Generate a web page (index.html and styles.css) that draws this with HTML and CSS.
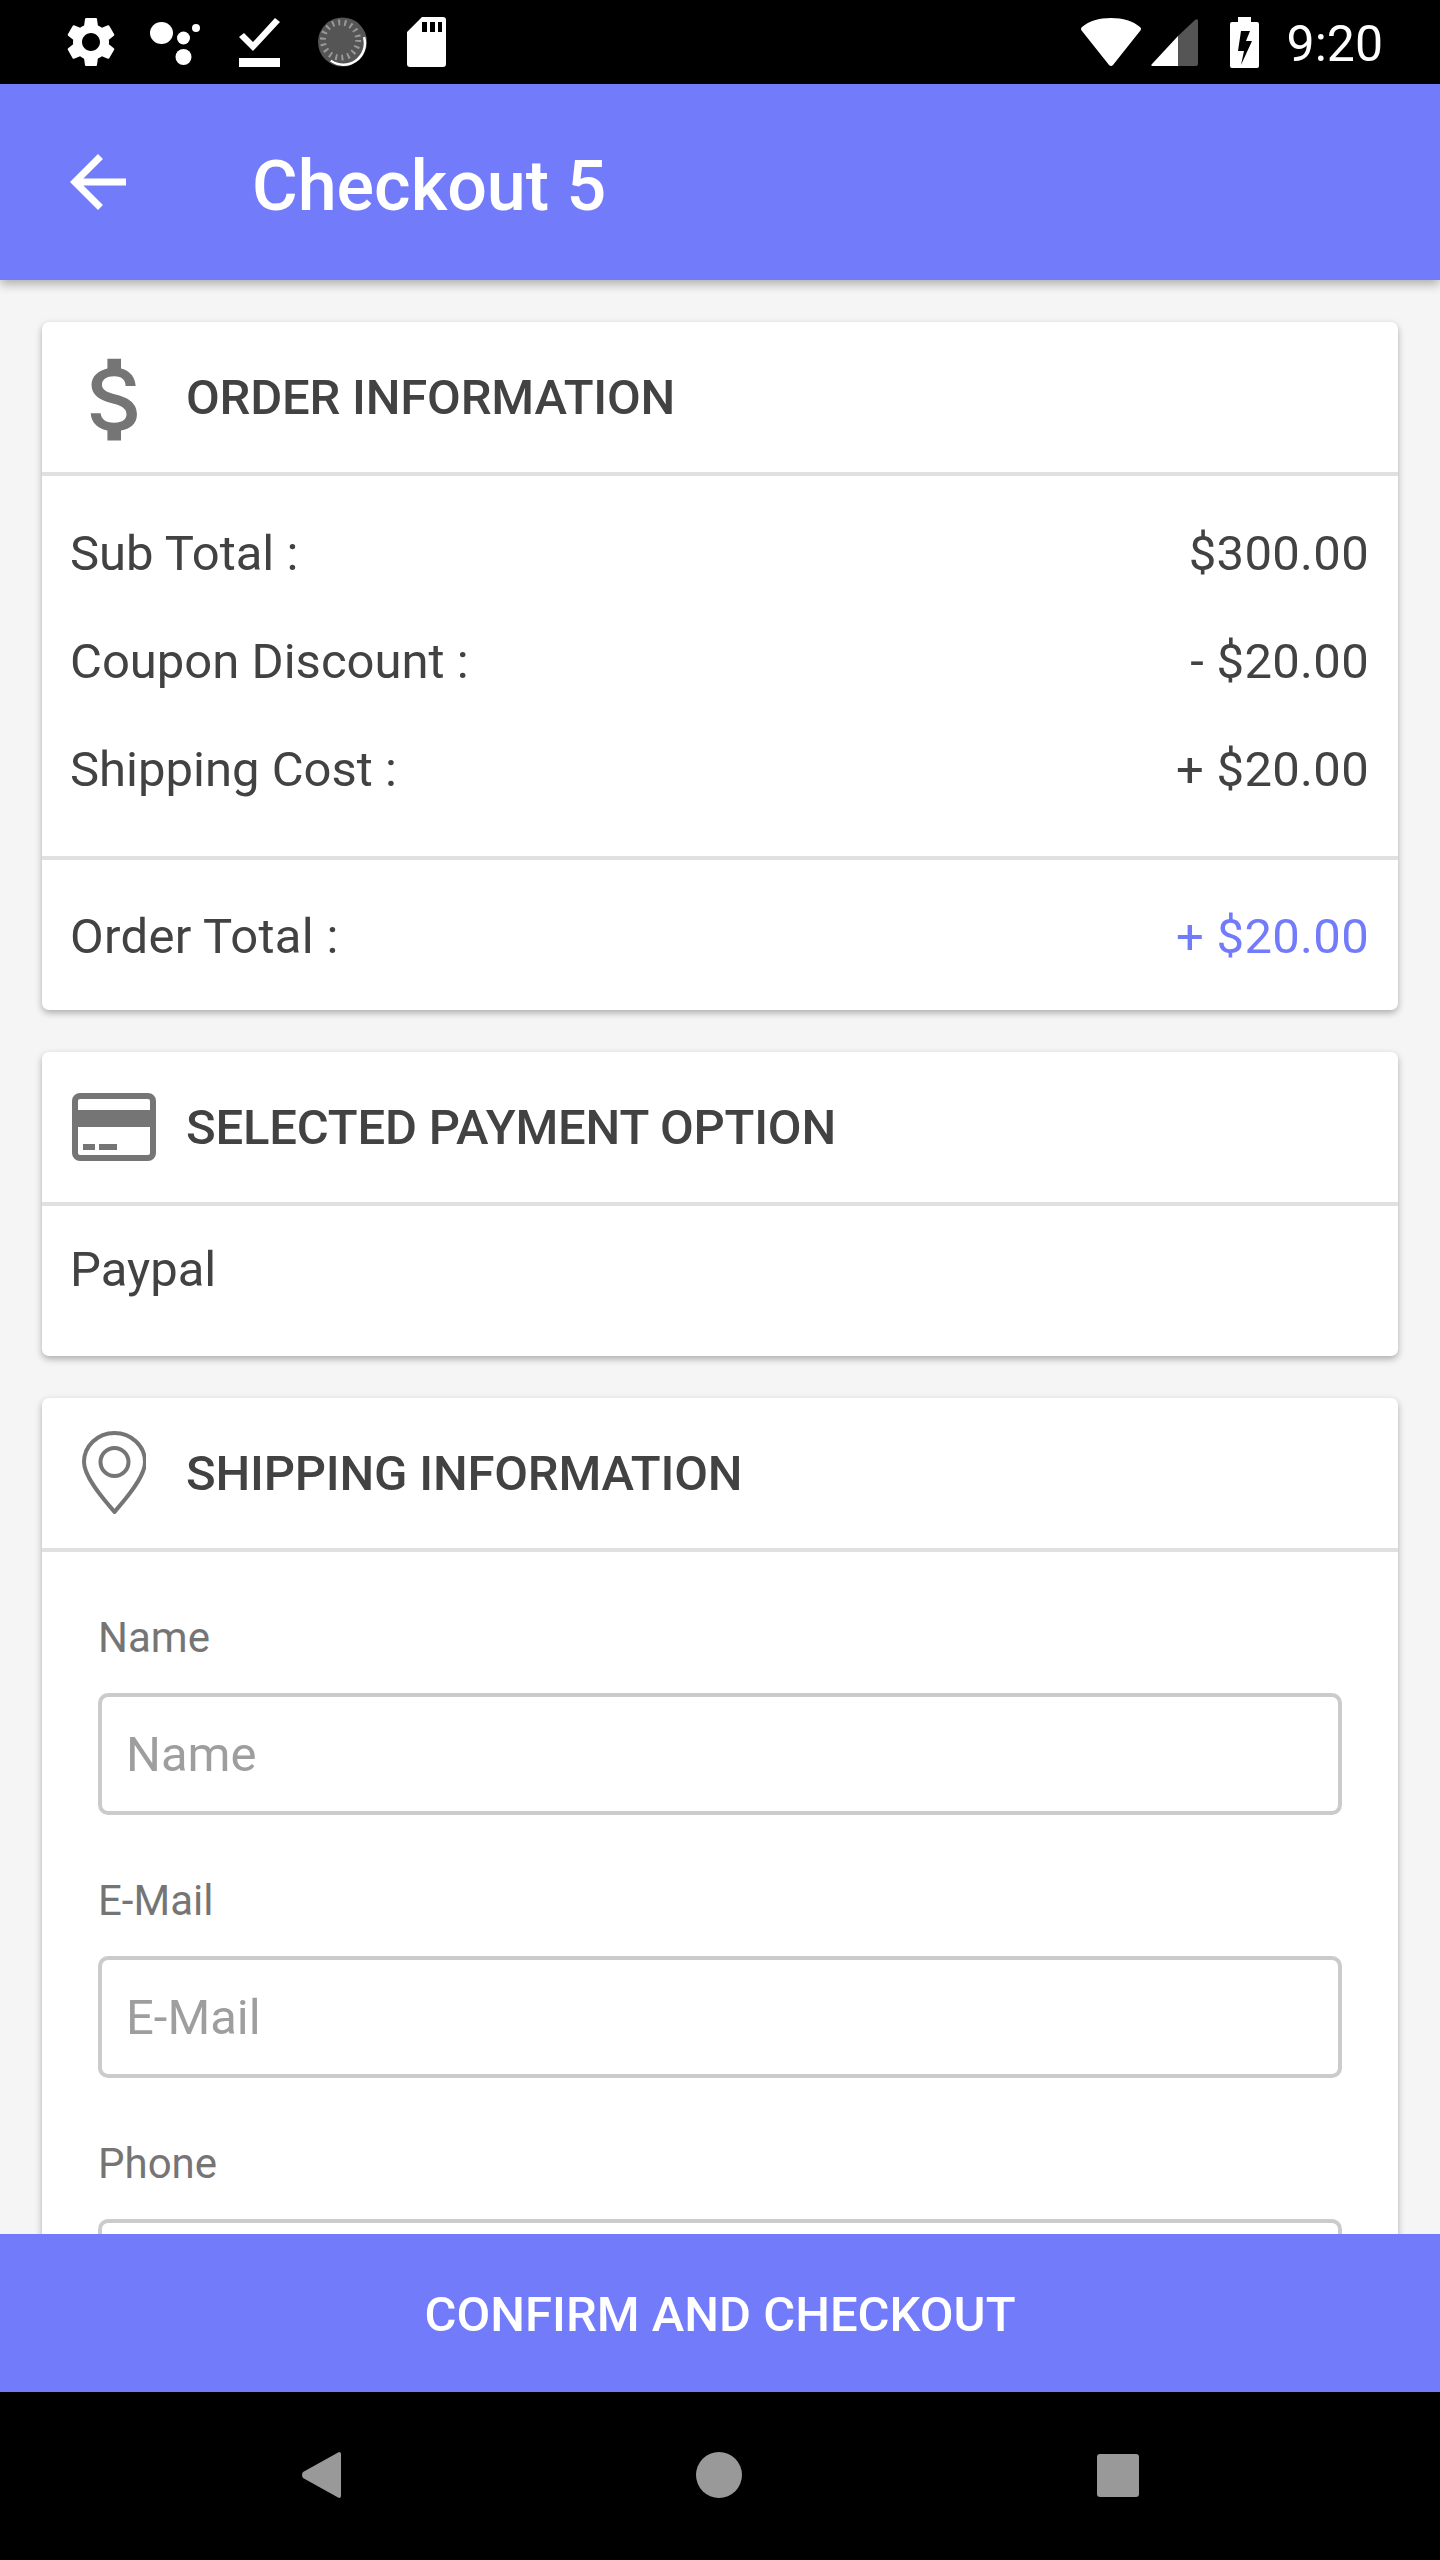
FILE: index.html
```html
<!DOCTYPE html>
<html>
<head>
    <title>Checkout 5</title>
    <link rel="stylesheet" href="styles.css">
</head>

<body>
    <div class="screen">
        <!-- Status bar -->
        <div class="status-bar">
            <div class="status-left">
                <svg class="st-cog" viewBox="2.5 2 19 20"><path fill="#fff" d="M19.14 12.94c.04-.3.06-.61.06-.94 0-.32-.02-.64-.07-.94l2.03-1.58c.18-.14.23-.41.12-.61l-1.92-3.32c-.12-.22-.37-.29-.59-.22l-2.39.96c-.5-.38-1.03-.7-1.62-.94l-.36-2.54c-.04-.24-.24-.41-.48-.41h-3.84c-.24 0-.43.17-.47.41l-.36 2.54c-.59.24-1.13.57-1.62.94l-2.39-.96c-.22-.08-.47 0-.59.22L2.74 8.87c-.12.21-.08.47.12.61l2.03 1.58c-.05.3-.09.63-.09.94s.02.64.07.94l-2.03 1.58c-.18.14-.23.41-.12.61l1.92 3.32c.12.22.37.29.59.22l2.39-.96c.5.38 1.03.7 1.62.94l.36 2.54c.05.24.24.41.48.41h3.84c.24 0 .44-.17.47-.41l.36-2.54c.59-.24 1.13-.56 1.62-.94l2.39.96c.22.08.47 0 .59-.22l1.92-3.32c.12-.22.07-.47-.12-.61l-2.01-1.58zM12 15.6c-1.98 0-3.6-1.62-3.6-3.6s1.62-3.6 3.6-3.6 3.6 1.62 3.6 3.6-1.62 3.6-3.6 3.6z"/></svg>
                <svg class="st-dots" viewBox="0 0 50 44"><ellipse cx="11.500" cy="11" rx="11.500" ry="11" fill="#fff"/><circle cx="33.500" cy="16" r="6.500" fill="#fff"/><circle cx="46" cy="6" r="4" fill="#fff"/><circle cx="33.500" cy="35" r="8" fill="#fff"/></svg>
                <svg class="st-check" viewBox="0 0 41 50"><path fill="#fff" d="M0 20l5-4 9 9L36 1l5 4-27 29zM0 41h41v9H0z"/></svg>
                <svg class="st-dial" viewBox="0 0 50 50">
                    <circle cx="25" cy="25" r="25" fill="#555"/>
                    <path fill="none" stroke="#fff" stroke-width="2.5" d="M47 20a22 22 0 0 1-34 24"/>
                    <circle cx="23" cy="23" r="18" fill="none" stroke="#999" stroke-width="6" stroke-dasharray="2 4.3"/>
                </svg>
                <svg class="st-sd" viewBox="0 0 39 50"><path fill="#fff" fill-rule="evenodd" d="M15 0h21q3 0 3 3v44q0 3-3 3H3q-3 0-3-3V15zM15 5v10h5V5zm8 0v10h5V5zm8 0v10h4V5z"/></svg>
            </div>
            <div class="status-right">
                <svg class="st-wifi" viewBox="0 0 60 48"><path fill="#fff" d="M30 0c12 0 22 3 29 9q2 2 0 4L32 47q-2 2-4 0L1 13q-2-2 0-4C8 3 18 0 30 0z"/></svg>
                <svg class="st-signal" viewBox="0 0 47 47"><path fill="#555" d="M27 17L44 1q3-2 3 1v43q0 2-2 2H27z"/><path fill="#fff" d="M27 17v30H2q-3 0-1-2z"/></svg>
                <svg class="st-battery" viewBox="0 0 29 51"><path fill="#fff" fill-rule="evenodd" d="M8 0h13v5h6q2 0 2 2v42q0 2-2 2H2q-2 0-2-2V7q0-2 2-2h6zM11 14l-3 20h6l-3 14 11-24h-6l4-10z"/></svg>
                <span class="time">9:20</span>
            </div>
        </div>

        <!-- Header -->
        <div class="app-bar">
            <svg class="back-icon" viewBox="0 0 24 24"><path fill="#fff" d="M20 11H7.83l5.59-5.59L12 4l-8 8 8 8 1.41-1.41L7.83 13H20v-2z"/></svg>
            <span class="app-title">Checkout 5</span>
        </div>

        <div class="content">
            <div class="card">
                <div class="card-head">
                    <svg class="ic-dollar" viewBox="0 0 24 24"><path fill="#757575" d="M11.8 10.9c-2.27-.59-3-1.2-3-2.15 0-1.09 1.01-1.85 2.7-1.85 1.78 0 2.44.85 2.5 2.1h2.21c-.07-1.72-1.12-3.3-3.21-3.81V3h-3v2.16c-1.94.42-3.5 1.68-3.5 3.61 0 2.31 1.91 3.46 4.7 4.13 2.5.6 3 1.48 3 2.41 0 .69-.49 1.79-2.7 1.79-2.06 0-2.87-.92-2.98-2.1h-2.2c.12 2.19 1.76 3.42 3.68 3.83V21h3v-2.15c1.95-.37 3.5-1.5 3.5-3.55 0-2.84-2.43-3.81-4.7-4.4z"/></svg>
                    <h2>ORDER INFORMATION</h2>
                </div>
                <div class="price-rows">
                    <div class="row"><span>Sub Total :</span><span class="amount">$300.00</span></div>
                    <div class="row"><span>Coupon Discount :</span><span class="amount">- $20.00</span></div>
                    <div class="row"><span>Shipping Cost :</span><span class="amount">+ $20.00</span></div>
                </div>
                <div class="row total-row"><span class="total-label">Order Total :</span><span class="amount accent">+ $20.00</span></div>
            </div>

            <div class="card">
                <div class="card-head">
                    <svg class="ic-card" viewBox="0 0 84 68">
                        <rect x="3" y="3" width="78" height="62" rx="5" fill="none" stroke="#757575" stroke-width="6"/>
                        <path fill="#757575" d="M3 17h78v17H3zM11 51h12v6H11zM27 51h18v6H27z"/>
                    </svg>
                    <h2>SELECTED PAYMENT OPTION</h2>
                </div>
                <div class="payment-name">Paypal</div>
            </div>

            <div class="card">
                <div class="card-head">
                    <svg class="ic-pin" viewBox="0 0 64 84">
                        <path fill="none" stroke="#757575" stroke-width="4" stroke-linejoin="round" d="M32.500 81C27 74 2 48 2 31a30.500 29 0 0 1 61 0c0 17-25 43-30.500 50z"/>
                        <circle cx="32.500" cy="31" r="14" fill="none" stroke="#757575" stroke-width="4"/>
                    </svg>
                    <h2>SHIPPING INFORMATION</h2>
                </div>
                <div class="form-body">
                    <label for="name">Name</label>
                    <input type="text" id="name" placeholder="Name">
                    <label for="email">E-Mail</label>
                    <input type="text" id="email" placeholder="E-Mail">
                    <label for="phone">Phone</label>
                    <input type="text" id="phone" placeholder="Phone">
                </div>
            </div>
        </div>

        <div class="confirm-btn">CONFIRM AND CHECKOUT</div>

        <!-- Nav bar -->
        <div class="nav-bar">
            <svg class="nav-back" viewBox="0 0 40 46"><path fill="#999" d="M38 0q2 0 2 2v42q0 2-2 2L2 26q-2-3 0-6z"/></svg>
            <div class="nav-home"></div>
            <div class="nav-recent"></div>
        </div>
    </div>
</body>
</html>
```

FILE: styles.css
```css
* {
    box-sizing: border-box;
}

body {
    margin: 0;
    font-family: Roboto, "Liberation Sans", sans-serif;
    background-color: #f5f5f5;
}

.screen {
    width: 1440px;
    height: 2560px;
    display: flex;
    flex-direction: column;
    overflow: hidden;
}

/* status bar */
.status-bar {
    height: 84px;
    flex: none;
    background-color: #000;
    display: flex;
    justify-content: space-between;
    align-items: center;
    padding: 0 57px 0 66px;
}

.status-left,
.status-right {
    display: flex;
    align-items: center;
}

.st-cog { width: 50px; height: 50px; }
.st-dots { width: 50px; height: 44px; margin-left: 34px; margin-top: 3px; }
.st-check { width: 41px; height: 50px; margin-left: 39px; }
.st-dial { width: 49px; height: 50px; margin-left: 38px; }
.st-sd { width: 39px; height: 50px; margin-left: 40px; }

.st-wifi { width: 60px; height: 48px; }
.st-signal { width: 47px; height: 47px; margin-left: 10px; }
.st-battery { width: 29px; height: 51px; margin-left: 32px; }

.time {
    color: #fff;
    font-size: 50px;
    margin-left: 28px;
    padding-top: 3px;
}

/* header */
.app-bar {
    height: 196px;
    flex: none;
    background-color: #727cfa;
    display: flex;
    align-items: center;
    padding-left: 56px;
    box-shadow: 0 4px 10px rgba(0, 0, 0, 0.3);
    position: relative;
}

.back-icon {
    width: 84px;
    height: 84px;
}

.app-title {
    color: #fff;
    font-size: 70px;
    font-weight: 500;
    margin-left: 112px;
    padding-top: 7px;
}

/* cards */
.content {
    flex: 1;
    min-height: 0;
    padding: 42px 42px 0;
    display: flex;
    flex-direction: column;
    gap: 42px;
    overflow: hidden;
}

.card {
    flex: none;
    background-color: #fff;
    border-radius: 7px;
    box-shadow: 0 3px 7px rgba(0, 0, 0, 0.3);
}

.card-head {
    height: 154px;
    display: flex;
    align-items: center;
    border-bottom: 4px solid #e0e0e0;
    position: relative;
    padding-left: 144px;
}

.card-head h2 {
    margin: 0;
    font-size: 49px;
    font-weight: 500;
    letter-spacing: -0.2px;
    color: #424242;
}

.ic-dollar {
    position: absolute;
    left: 20px;
    top: 23px;
    width: 109px;
    height: 109px;
}

.ic-card {
    position: absolute;
    left: 30px;
    top: 41px;
    width: 84px;
    height: 68px;
}

.ic-pin {
    position: absolute;
    left: 40px;
    top: 33px;
    width: 64px;
    height: 84px;
}

.price-rows {
    padding: 23px 0 33px;
    border-bottom: 4px solid #e0e0e0;
}

.row {
    display: flex;
    justify-content: space-between;
    align-items: center;
    height: 108px;
    padding: 0 29px 0 28px;
    font-size: 49px;
    color: #424242;
}

.amount {
    letter-spacing: 0.3px;
}

.total-row {
    height: 150px;
    padding-top: 3px;
}

.total-label {
    letter-spacing: 0.3px;
}

.accent {
    color: #727cfa;
}

.payment-name {
    height: 150px;
    padding: 35px 29px 0 28px;
    font-size: 49px;
    color: #424242;
}

.form-body {
    padding: 61px 56px 0;
}

.form-body label {
    display: block;
    font-size: 42px;
    line-height: 50px;
    color: #757575;
    margin-bottom: 30px;
}

.form-body input {
    display: block;
    width: 100%;
    height: 122px;
    padding: 0 24px;
    margin-bottom: 61px;
    border: 4px solid #cbcbcb;
    border-radius: 10px;
    background-color: #fff;
    font-family: Roboto, "Liberation Sans", sans-serif;
    font-size: 49px;
    color: #424242;
}

.form-body input::placeholder {
    color: #9e9e9e;
    opacity: 1;
}

/* bottom */
.confirm-btn {
    height: 158px;
    flex: none;
    background-color: #727cfa;
    color: #fff;
    font-size: 49px;
    font-weight: 500;
    padding-top: 2px;
    display: flex;
    align-items: center;
    justify-content: center;
    position: relative;
}

.nav-bar {
    height: 168px;
    flex: none;
    background-color: #000;
    position: relative;
}

.nav-back {
    position: absolute;
    left: 301px;
    top: 60px;
    width: 40px;
    height: 46px;
}

.nav-home {
    position: absolute;
    left: 696px;
    top: 60px;
    width: 46px;
    height: 46px;
    border-radius: 50%;
    background-color: #999;
}

.nav-recent {
    position: absolute;
    left: 1097px;
    top: 62px;
    width: 42px;
    height: 43px;
    border-radius: 3px;
    background-color: #999;
}
```
